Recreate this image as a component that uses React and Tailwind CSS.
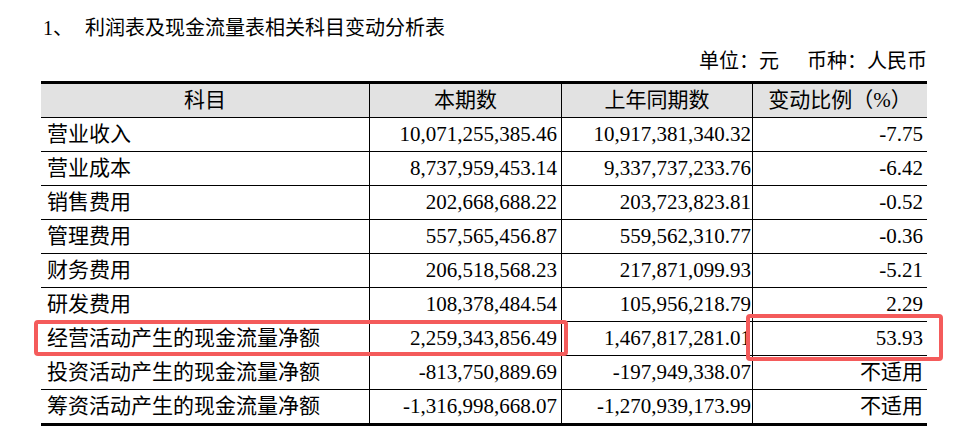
import React from "react";

const rows = [
  ["营业收入", "10,071,255,385.46", "10,917,381,340.32", "-7.75"],
  ["营业成本", "8,737,959,453.14", "9,337,737,233.76", "-6.42"],
  ["销售费用", "202,668,688.22", "203,723,823.81", "-0.52"],
  ["管理费用", "557,565,456.87", "559,562,310.77", "-0.36"],
  ["财务费用", "206,518,568.23", "217,871,099.93", "-5.21"],
  ["研发费用", "108,378,484.54", "105,956,218.79", "2.29"],
  ["经营活动产生的现金流量净额", "2,259,343,856.49", "1,467,817,281.01", "53.93"],
  ["投资活动产生的现金流量净额", "-813,750,889.69", "-197,949,338.07", "不适用"],
  ["筹资活动产生的现金流量净额", "-1,316,998,668.07", "-1,270,939,173.99", "不适用"],
];

const cjk = "font-['Liberation_Serif','Noto_Sans_CJK_SC',serif]";
const num = "text-[21px] font-['Liberation_Serif',serif] whitespace-nowrap";

export default function App() {
  return (
    <div className="relative w-[963px] h-[441px] bg-white text-black overflow-hidden">
      <div className={`pt-[14px] pl-[43px] text-[20px] leading-[28px] ${cjk}`}>
        <span className="mr-[12px]">1、</span>
        <span>利润表及现金流量表相关科目变动分析表</span>
      </div>
      <div className={`mt-[7px] w-[927px] flex justify-end text-[20px] leading-[24px] ${cjk}`}>
        <span>单位：元</span>
        <span className="ml-[28px]">币种：人民币</span>
      </div>
      <div className="ml-[41px] mt-[8px] w-[886px] border-t-[3px] border-b-[3px] border-black">
        <div className={`flex h-[34px] bg-[#e2e2e2] border-b border-black text-[21px] ${cjk}`}>
          <div className="w-[329px] border-r border-black flex items-center justify-center">科目</div>
          <div className="w-[192px] border-r border-black flex items-center justify-center">本期数</div>
          <div className="w-[191px] border-r border-black flex items-center justify-center">上年同期数</div>
          <div className="w-[174px] flex items-center justify-center">变动比例（%）</div>
        </div>
        {rows.map((r, i) => (
          <div
            key={i}
            className={`flex ${i === rows.length - 1 ? "h-[33px]" : "h-[34px] border-b border-black"}`}
          >
            <div className={`w-[329px] border-r border-black flex items-center pl-[6px] text-[21px] ${cjk}`}>
              {r[0]}
            </div>
            <div className={`w-[192px] border-r border-black flex items-center justify-end pr-[4px] ${num}`}>
              {r[1]}
            </div>
            <div className={`w-[191px] border-r border-black flex items-center justify-end pr-[1px] ${num}`}>
              {r[2]}
            </div>
            <div className={`w-[174px] flex items-center justify-end pr-[4px] whitespace-nowrap ${r[3] === "不适用" ? `text-[21px] ${cjk}` : num}`}>
              {r[3]}
            </div>
          </div>
        ))}
      </div>
      <div className="absolute left-[34px] top-[320px] w-[534px] h-[36px] border-[4px] border-[#f45b5b] rounded-[4px]" />
      <div className="absolute left-[746px] top-[314px] w-[197px] h-[47px] border-[4px] border-[#f45b5b] rounded-[4px]" />
    </div>
  );
}
